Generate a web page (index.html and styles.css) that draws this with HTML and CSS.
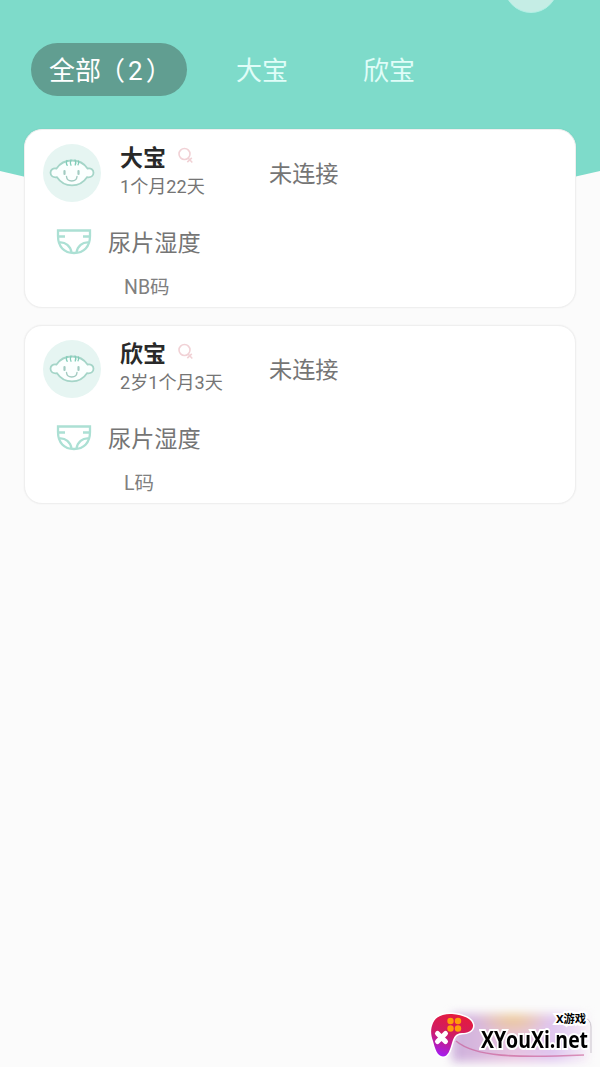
FILE: index.html
```html
<!DOCTYPE html>
<html lang="zh-CN">
<head>
    <meta charset="UTF-8">
    <meta name="viewport" content="width=device-width, initial-scale=1.0">
    <title>宝宝列表</title>
    <link rel="stylesheet" href="styles.css">
</head>
<body>
    <!-- shared icons -->
    <svg class="sprite" width="0" height="0">
        <symbol id="icon-baby" viewBox="0 0 58 58">
            <path d="M13.500 24.500C17.500 18.500 22.500 16.500 29 16.500s11.500 2 15.500 8c3.500-.8 6 1.200 6 4.300s-2.500 5-6.500 4.400C40.500 38.500 35.500 41.300 29 41.300s-11.500-2.800-15-8.100c-4 .6-6.500-1.300-6.500-4.400s2.500-5.100 6-4.300z" fill="#fbfffe" stroke="#a5d5c8" stroke-width="1.800"/>
            <path d="M24 16.500c-1 2-.8 3.500.2 4.800M28 16c-.8 2-.8 3.800 0 5.300M32 16c.9 1.500 1 3.500.2 5M35.500 17c.4 1.400.2 2.700-.5 3.800" fill="none" stroke="#82cdb9" stroke-width="1.300" stroke-linecap="round"/>
            <path d="M21.500 27v3M35.500 27v3" fill="none" stroke="#a2cbc1" stroke-width="2.200" stroke-linecap="round"/>
            <path d="M23.500 32.500c.5 6 10 6 10.500 0" fill="none" stroke="#a2cbc1" stroke-width="1.400" stroke-linecap="round"/>
        </symbol>
        <symbol id="icon-girl" viewBox="0 0 18 18">
            <circle cx="7.500" cy="7" r="5.500"/>
            <path d="M10.800 10.800l4.500 4.700M14.800 10.900l-4.500 4.300"/>
        </symbol>
        <symbol id="icon-diaper" viewBox="0 0 36 28">
            <path d="M2 2.500h32v5.500c0 10.500-6 17-16 17S2 18.500 2 8z"/>
            <path d="M2 8.500h7M27 8.500h7M3.500 14.500C9.500 14 14.500 18 15.500 24.500M32.500 14.500C26.500 14 21.500 18 20.500 24.500"/>
        </symbol>
    </svg>

    <div class="page">
        <svg class="header-bg" viewBox="0 0 600 210">
            <path d="M0 0H600V171Q300 245 0 171Z" fill="#7edbca"/>
        </svg>
        <div class="header-dot"></div>

        <nav class="tabs">
            <a class="tab active">全部<span class="count">（2）</span></a>
            <a class="tab">大宝</a>
            <a class="tab">欣宝</a>
        </nav>

        <main class="list">
            <section class="card">
                <div class="card-top">
                    <svg class="avatar"><use href="#icon-baby"/></svg>
                    <div class="info">
                        <h2 class="name">大宝 <svg class="gender"><use href="#icon-girl"/></svg></h2>
                        <p class="age">1个月22天</p>
                    </div>
                    <span class="status">未连接</span>
                </div>
                <div class="humidity">
                    <svg class="diaper"><use href="#icon-diaper"/></svg>
                    <span>尿片湿度</span>
                </div>
                <p class="size">NB码</p>
            </section>

            <section class="card">
                <div class="card-top">
                    <svg class="avatar"><use href="#icon-baby"/></svg>
                    <div class="info">
                        <h2 class="name">欣宝 <svg class="gender"><use href="#icon-girl"/></svg></h2>
                        <p class="age">2岁1个月3天</p>
                    </div>
                    <span class="status">未连接</span>
                </div>
                <div class="humidity">
                    <svg class="diaper"><use href="#icon-diaper"/></svg>
                    <span>尿片湿度</span>
                </div>
                <p class="size">L码</p>
            </section>
        </main>

        <!-- site watermark -->
        <div class="watermark">
            <div class="glow"></div>
            <svg class="swoosh" viewBox="0 0 180 67">
                <path d="M36 41C55 57 95 58 164 55" fill="none" stroke="#c8548f" stroke-width="1.600" opacity=".6"/>
                <path d="M164 18q7 1 7 9v26" fill="none" stroke="#c9c3cb" stroke-width="1"/>
            </svg>
            <svg class="gamepad" viewBox="0 0 46 46">
                <defs>
                    <linearGradient id="pad" x1=".6" y1="0" x2=".3" y2="1">
                        <stop offset="0" stop-color="#e51b3c"/>
                        <stop offset=".5" stop-color="#cf1c65"/>
                        <stop offset="1" stop-color="#a41df0"/>
                    </linearGradient>
                </defs>
                <path d="M4 11C7 4 15 1.500 23 2c9 .5 20 4 21 11 .6 6-6 8-11 8-7 .5-8 4-10 10-2 7-4 13.500-9 13.500-6 0-8-8.500-10-15.500C1.500 22 1.500 17 4 11z" fill="url(#pad)" stroke="#fff" stroke-width="3" paint-order="stroke"/>
                <path d="M8.500 21.500l8 8M16.500 21.500l-8 8" stroke="#fff" stroke-width="5" stroke-linecap="round"/>
                <g fill="#ff9d0a">
                    <circle cx="21.500" cy="9" r="3.200"/>
                    <circle cx="29" cy="9" r="3.200"/>
                    <circle cx="21.500" cy="16.500" r="3.200"/>
                    <circle cx="29" cy="16.500" r="3.200"/>
                </g>
            </svg>
            <span class="mark-small">X游戏</span>
            <span class="mark-url">XYouXi.net</span>
        </div>
    </div>
</body>
</html>
```
FILE: styles.css
```css
* {
    box-sizing: border-box;
}
body {
    margin: 0;
    background: #fbfbfb;
    font-family: Roboto, "Noto Sans CJK SC", sans-serif;
    color: #757575;
}
h2, p {
    margin: 0;
}
.sprite {
    position: absolute;
}
.page {
    position: relative;
    height: 1067px;
    overflow: hidden;
}

/* --- HEADER --- */
.header-bg {
    position: absolute;
    top: 0;
    left: 0;
    width: 600px;
    height: 210px;
}
.header-dot {
    position: absolute;
    top: -41px;
    left: 504px;
    width: 54px;
    height: 54px;
    border-radius: 50%;
    background: #c5ede5;
    border: 1px solid #b2f0e5;
}
.tabs {
    position: relative;
    display: flex;
    gap: 14px;
    padding: 43px 0 0 31px;
}
.tab {
    height: 53px;
    padding: 1px 0 0 18px;
    border-radius: 27px;
    line-height: 54px;
    font-size: 26px;
    color: #e0fdf8;
    white-space: nowrap;
}
.tab + .tab {
    width: 113px;
    padding: 1px 0 0 35px;
}
.tab.active {
    width: 156px;
    background: #619e91;
    color: #fff;
}
.count {
    margin-left: -2px;
    letter-spacing: 3px;
}

/* --- CARDS --- */
.list {
    position: relative;
    display: flex;
    flex-direction: column;
    gap: 17px;
    padding: 33px 24px 0;
}
.card {
    height: 179px;
    padding: 14px 18px 0;
    background: #fff;
    border: 1px solid #efefef;
    border-radius: 18px;
    box-shadow: 0 0 2px rgba(0, 0, 0, 0.06);
}
.card-top {
    display: flex;
    height: 56px;
}
.avatar {
    width: 58px;
    height: 58px;
    border-radius: 50%;
    background: #e6f5f2;
}
.info {
    width: 149px;
    margin-left: 19px;
}
.name {
    display: flex;
    align-items: center;
    height: 28px;
    padding-top: 2px;
    font-size: 23px;
    line-height: 24px;
    color: #292929;
}
.gender {
    width: 18px;
    height: 18px;
    margin: -7px 0 0 11px;
    fill: none;
    stroke: #f1d2d6;
    stroke-width: 1.6;
}
.age {
    margin-top: 3px;
    font-size: 18.1px;
    line-height: 24px;
}
.status {
    padding-top: 13px;
    font-size: 23.2px;
    line-height: 34px;
}
.humidity {
    display: flex;
    align-items: center;
    height: 34px;
    margin-top: 24px;
    padding-left: 13px;
    font-size: 23.2px;
}
.diaper {
    width: 36px;
    height: 28px;
    margin: 1px 16px 0 0;
    fill: none;
    stroke: #ace0d4;
    stroke-width: 2.3;
}
.size {
    margin-top: 17px;
    padding-left: 81px;
    font-size: 19.5px;
    line-height: 26px;
    color: #808080;
}

/* --- WATERMARK --- */
.watermark {
    position: absolute;
    right: 0;
    bottom: 0;
    width: 180px;
    height: 67px;
    font-family: "Noto Sans", "Noto Sans CJK SC", sans-serif;
    font-weight: bold;
    color: #000;
}
.glow {
    position: absolute;
    top: 14px;
    left: 32px;
    width: 136px;
    height: 48px;
    background:
        radial-gradient(ellipse at 45% 5%, #ecca94 0%, transparent 35%),
        linear-gradient(90deg, #cdb0dc, #e7c3e0 45%, #dfc6f0 75%, #f6eef6);
    filter: blur(5px);
}
.swoosh {
    position: absolute;
    top: 0;
    left: 0;
    width: 180px;
    height: 67px;
}
.gamepad {
    position: absolute;
    top: 12px;
    left: 9px;
    width: 46px;
    height: 46px;
    overflow: visible;
}
.mark-small,
.mark-url {
    position: absolute;
    white-space: nowrap;
    -webkit-text-stroke: 4px #fff;
    paint-order: stroke fill;
}
.mark-small {
    top: 13px;
    left: 136px;
    font-size: 11.3px;
    line-height: 12px;
}
.mark-url {
    top: 28px;
    left: 61px;
    font-family: "Open Sans", sans-serif;
    font-size: 24px;
    line-height: 22px;
    transform: scaleX(0.81);
    transform-origin: left;
}
```
